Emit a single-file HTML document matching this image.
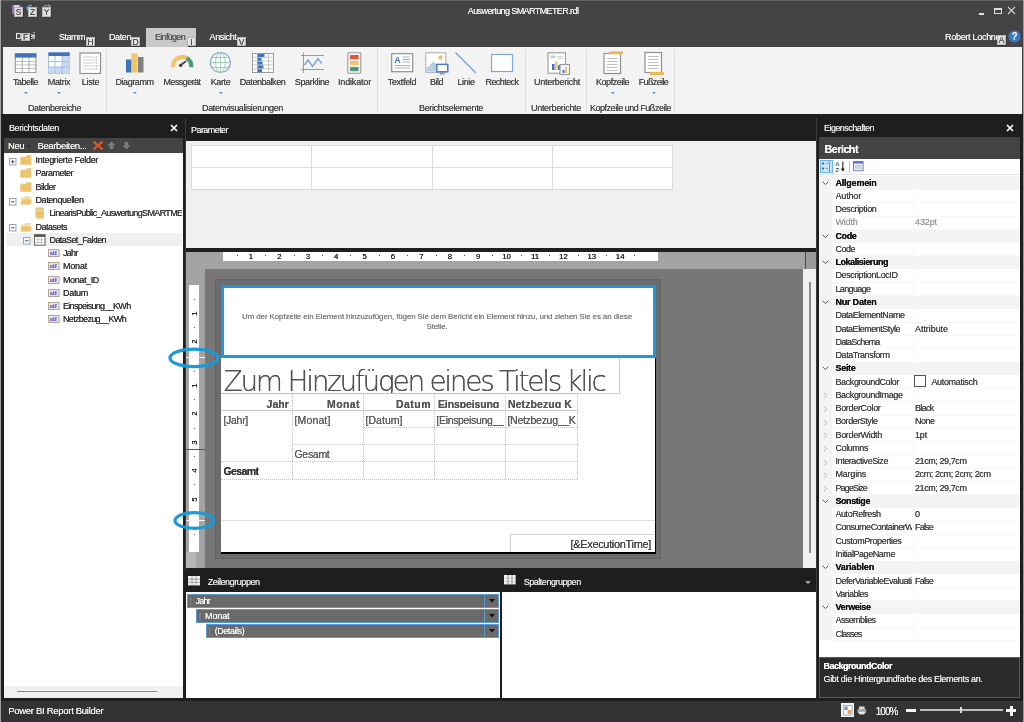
<!DOCTYPE html>
<html lang="de"><head><meta charset="utf-8"><title>Power BI Report Builder</title><style>
html,body{margin:0;padding:0;}
body{width:1024px;height:722px;overflow:hidden;background:#1e1e1e;font-family:"Liberation Sans", sans-serif;position:relative;}
#app{position:absolute;left:0;top:0;width:1024px;height:722px;overflow:hidden;will-change:transform;}
#app div,#app svg{position:absolute;box-sizing:border-box;}
#app .t{white-space:nowrap;text-shadow:0 0 0.2px;}
</style></head>
<body><div id="app">
<div style="left:0px;top:0px;width:1024px;height:722px;background:#444444;"></div>
<div style="left:0px;top:0px;width:1024px;height:1px;background:#646464;"></div>
<div style="left:0px;top:0px;width:1.1px;height:722px;background:#a0a0a0;"></div>
<div style="left:1022.8px;top:0px;width:1.2px;height:722px;background:#9a9a9a;"></div>
<div class="t" style="top:4.8px;font-size:9px;line-height:13px;color:#f0f0f0;letter-spacing:-0.595px;left:467.8px;"><span>Auswertung SMARTMETER.rdl</span></div>
<svg style="left:11px;top:4px;" width="12" height="12" viewBox="0 0 12 12"><rect x="1" y="1" width="9" height="9" rx="1" fill="#9b6fc0"/><rect x="3" y="1" width="5" height="3" fill="#d9c7ea"/></svg>
<svg style="left:25px;top:3px;" width="12" height="10" viewBox="0 0 12 10"><path d="M2.5 6 C3 3.5 5 2.2 7 2.2" stroke="#5b9bd5" stroke-width="1.5" fill="none"/><path d="M0.8 3.5 L2 7.5 L5 5z" fill="#5b9bd5"/></svg>
<svg style="left:41px;top:3px;" width="12" height="12" viewBox="0 0 12 12"><path d="M3 9 C0 5 4 1 8 3" stroke="#8a8a8a" stroke-width="1.4" fill="none"/><path d="M10.5 3 L7 1 L7.5 5.5z" fill="#8a8a8a"/></svg>
<div style="left:14px;top:7px;width:9px;height:9.5px;background:#e2e2e2;border:1px solid #b8b8b8;box-shadow:1px 1px 0 #3a3a3a;"></div>
<div class="t" style="top:6.15px;font-size:8.5px;line-height:12px;color:#505050;letter-spacing:0px;left:-281.5px;width:600px;text-align:center;"><span>S</span></div>
<div style="left:28px;top:7px;width:9px;height:9.5px;background:#e2e2e2;border:1px solid #b8b8b8;box-shadow:1px 1px 0 #3a3a3a;"></div>
<div class="t" style="top:6.15px;font-size:8.5px;line-height:12px;color:#505050;letter-spacing:0px;left:-267.5px;width:600px;text-align:center;"><span>Z</span></div>
<div style="left:42px;top:7px;width:9px;height:9.5px;background:#e2e2e2;border:1px solid #b8b8b8;box-shadow:1px 1px 0 #3a3a3a;"></div>
<div class="t" style="top:6.15px;font-size:8.5px;line-height:12px;color:#505050;letter-spacing:0px;left:-253.5px;width:600px;text-align:center;"><span>Y</span></div>
<div style="left:146px;top:28px;width:50px;height:18.6px;background:#c9c9c9;"></div>
<div class="t" style="top:30px;font-size:9px;line-height:13px;color:#f0f0f0;letter-spacing:-0.403px;left:15.5px;"><span>Datei</span></div>
<div class="t" style="top:30.5px;font-size:9px;line-height:13px;color:#f0f0f0;letter-spacing:-0.503px;left:59px;"><span>Stamm</span></div>
<div class="t" style="top:30.5px;font-size:9px;line-height:13px;color:#f0f0f0;letter-spacing:-0.406px;left:109px;"><span>Daten</span></div>
<div class="t" style="top:30.5px;font-size:9px;line-height:13px;color:#555;letter-spacing:-0.691px;left:155px;"><span>Einfügen</span></div>
<div class="t" style="top:30.5px;font-size:9px;line-height:13px;color:#f0f0f0;letter-spacing:-0.359px;left:209.5px;"><span>Ansicht</span></div>
<div style="left:21px;top:32.5px;width:9px;height:8.5px;background:#e2e2e2;border:1px solid #b8b8b8;box-shadow:1px 1px 0 #3a3a3a;"></div>
<div class="t" style="top:31.15px;font-size:8.5px;line-height:12px;color:#505050;letter-spacing:0px;left:-274.5px;width:600px;text-align:center;"><span>F</span></div>
<div style="left:86px;top:37px;width:9px;height:8.5px;background:#e2e2e2;border:1px solid #b8b8b8;box-shadow:1px 1px 0 #3a3a3a;"></div>
<div class="t" style="top:35.65px;font-size:8.5px;line-height:12px;color:#505050;letter-spacing:0px;left:-209.5px;width:600px;text-align:center;"><span>H</span></div>
<div style="left:131px;top:37px;width:9px;height:8.5px;background:#e2e2e2;border:1px solid #b8b8b8;box-shadow:1px 1px 0 #3a3a3a;"></div>
<div class="t" style="top:35.65px;font-size:8.5px;line-height:12px;color:#505050;letter-spacing:0px;left:-164.5px;width:600px;text-align:center;"><span>D</span></div>
<div style="left:187px;top:37px;width:9px;height:8.5px;background:#e2e2e2;border:1px solid #b8b8b8;box-shadow:1px 1px 0 #3a3a3a;"></div>
<div class="t" style="top:35.65px;font-size:8.5px;line-height:12px;color:#505050;letter-spacing:0px;left:-108.5px;width:600px;text-align:center;"><span>I</span></div>
<div style="left:237px;top:37px;width:9px;height:8.5px;background:#e2e2e2;border:1px solid #b8b8b8;box-shadow:1px 1px 0 #3a3a3a;"></div>
<div class="t" style="top:35.65px;font-size:8.5px;line-height:12px;color:#505050;letter-spacing:0px;left:-58.5px;width:600px;text-align:center;"><span>V</span></div>
<div class="t" style="top:30.5px;font-size:9px;line-height:13px;color:#f0f0f0;letter-spacing:-0.289px;left:945px;width:53px;overflow:hidden;"><span>Robert Lochner</span></div>
<div style="left:997px;top:35px;width:9px;height:9.5px;background:#e2e2e2;border:1px solid #b8b8b8;box-shadow:1px 1px 0 #3a3a3a;"></div>
<div class="t" style="top:34.15px;font-size:8.5px;line-height:12px;color:#505050;letter-spacing:0px;left:701.5px;width:600px;text-align:center;"><span>A</span></div>
<svg style="left:1008px;top:30px;" width="13" height="13" viewBox="0 0 13 13"><circle cx="6.5" cy="6.5" r="6" fill="#3b78c3"/><text x="6.5" y="10" font-size="10" font-weight="bold" text-anchor="middle" fill="#fff" font-family="Liberation Sans, sans-serif">?</text></svg>
<div style="left:979px;top:13px;width:5px;height:2px;background:#e0e0e0;"></div>
<div style="left:994px;top:8px;width:8px;height:6px;border:1px solid #e0e0e0;border-top-width:2px;"></div>
<svg style="left:1007px;top:6px;" width="9" height="9" viewBox="0 0 9 9"><path d="M1 1 L8 8 M8 1 L1 8" stroke="#d0d0d0" stroke-width="1.2" fill="none"/></svg>
<div style="left:2.7px;top:46.6px;width:1019px;height:67.2px;background:#f3f3f3;"></div>
<div style="left:105.5px;top:49px;width:1px;height:63px;background:#dedede;"></div>
<div style="left:377px;top:49px;width:1px;height:63px;background:#dedede;"></div>
<div style="left:524.5px;top:49px;width:1px;height:63px;background:#dedede;"></div>
<div style="left:585.5px;top:49px;width:1px;height:63px;background:#dedede;"></div>
<div style="left:674px;top:49px;width:1px;height:63px;background:#dedede;"></div>
<div class="t" style="top:75.5px;font-size:9px;line-height:13px;color:#4a4a4a;letter-spacing:-0.504px;left:-274.5px;width:600px;text-align:center;"><span>Tabelle</span></div>
<svg style="left:23.5px;top:92.3px;" width="4" height="3" viewBox="0 0 4 3"><path d="M0 0 L3.8 0 L1.9 2.1z" fill="#5a88c0"/></svg>
<div class="t" style="top:75.5px;font-size:9px;line-height:13px;color:#4a4a4a;letter-spacing:-0.333px;left:-241px;width:600px;text-align:center;"><span>Matrix</span></div>
<svg style="left:57px;top:92.3px;" width="4" height="3" viewBox="0 0 4 3"><path d="M0 0 L3.8 0 L1.9 2.1z" fill="#5a88c0"/></svg>
<div class="t" style="top:75.5px;font-size:9px;line-height:13px;color:#4a4a4a;letter-spacing:-0.303px;left:-209.5px;width:600px;text-align:center;"><span>Liste</span></div>
<div class="t" style="top:75.5px;font-size:9px;line-height:13px;color:#4a4a4a;letter-spacing:-0.439px;left:-165.5px;width:600px;text-align:center;"><span>Diagramm</span></div>
<svg style="left:132.5px;top:92.3px;" width="4" height="3" viewBox="0 0 4 3"><path d="M0 0 L3.8 0 L1.9 2.1z" fill="#5a88c0"/></svg>
<div class="t" style="top:75.5px;font-size:9px;line-height:13px;color:#4a4a4a;letter-spacing:-0.559px;left:-118px;width:600px;text-align:center;"><span>Messgerät</span></div>
<div class="t" style="top:75.5px;font-size:9px;line-height:13px;color:#4a4a4a;letter-spacing:-0.403px;left:-79.5px;width:600px;text-align:center;"><span>Karte</span></div>
<svg style="left:218.5px;top:92.3px;" width="4" height="3" viewBox="0 0 4 3"><path d="M0 0 L3.8 0 L1.9 2.1z" fill="#5a88c0"/></svg>
<div class="t" style="top:75.5px;font-size:9px;line-height:13px;color:#4a4a4a;letter-spacing:-0.459px;left:-37.5px;width:600px;text-align:center;"><span>Datenbalken</span></div>
<div class="t" style="top:75.5px;font-size:9px;line-height:13px;color:#4a4a4a;letter-spacing:-0.337px;left:12px;width:600px;text-align:center;"><span>Sparkline</span></div>
<div class="t" style="top:75.5px;font-size:9px;line-height:13px;color:#4a4a4a;letter-spacing:-0.17px;left:54.5px;width:600px;text-align:center;"><span>Indikator</span></div>
<div class="t" style="top:75.5px;font-size:9px;line-height:13px;color:#4a4a4a;letter-spacing:-0.316px;left:102px;width:600px;text-align:center;"><span>Textfeld</span></div>
<div class="t" style="top:75.5px;font-size:9px;line-height:13px;color:#4a4a4a;letter-spacing:-0.504px;left:136.5px;width:600px;text-align:center;"><span>Bild</span></div>
<div class="t" style="top:75.5px;font-size:9px;line-height:13px;color:#4a4a4a;letter-spacing:-0.403px;left:166px;width:600px;text-align:center;"><span>Linie</span></div>
<div class="t" style="top:75.5px;font-size:9px;line-height:13px;color:#4a4a4a;letter-spacing:-0.566px;left:202px;width:600px;text-align:center;"><span>Rechteck</span></div>
<div class="t" style="top:75.5px;font-size:9px;line-height:13px;color:#4a4a4a;letter-spacing:-0.253px;left:257px;width:600px;text-align:center;"><span>Unterbericht</span></div>
<div class="t" style="top:75.5px;font-size:9px;line-height:13px;color:#4a4a4a;letter-spacing:-0.448px;left:312.5px;width:600px;text-align:center;"><span>Kopfzeile</span></div>
<svg style="left:610.5px;top:92.3px;" width="4" height="3" viewBox="0 0 4 3"><path d="M0 0 L3.8 0 L1.9 2.1z" fill="#5a88c0"/></svg>
<div class="t" style="top:75.5px;font-size:9px;line-height:13px;color:#4a4a4a;letter-spacing:-0.627px;left:353.5px;width:600px;text-align:center;"><span>Fußzeile</span></div>
<svg style="left:651.5px;top:92.3px;" width="4" height="3" viewBox="0 0 4 3"><path d="M0 0 L3.8 0 L1.9 2.1z" fill="#5a88c0"/></svg>
<div class="t" style="top:101.8px;font-size:9px;line-height:13px;color:#4a4a4a;letter-spacing:-0.427px;left:-245.5px;width:600px;text-align:center;"><span>Datenbereiche</span></div>
<div class="t" style="top:101.8px;font-size:9px;line-height:13px;color:#4a4a4a;letter-spacing:-0.36px;left:-57.5px;width:600px;text-align:center;"><span>Datenvisualisierungen</span></div>
<div class="t" style="top:101.8px;font-size:9px;line-height:13px;color:#4a4a4a;letter-spacing:-0.347px;left:151px;width:600px;text-align:center;"><span>Berichtselemente</span></div>
<div class="t" style="top:101.8px;font-size:9px;line-height:13px;color:#4a4a4a;letter-spacing:-0.31px;left:256px;width:600px;text-align:center;"><span>Unterberichte</span></div>
<div class="t" style="top:101.8px;font-size:9px;line-height:13px;color:#4a4a4a;letter-spacing:-0.48px;left:330.5px;width:600px;text-align:center;"><span>Kopfzeile und Fußzeile</span></div>
<svg style="left:14px;top:53px;" width="23" height="20" viewBox="0 0 23 20"><rect x="1.3" y="0.9" width="20.6" height="18.8" fill="#fff" stroke="#8a8a8a" stroke-width="1"/>
<rect x="0.9" y="0.4" width="21.4" height="4.2" fill="#3f75b8"/>
<path d="M8.2 4.6V19.5M15 4.6V19.5" stroke="#a0a0a0" stroke-width="0.9" fill="none"/><path d="M1.3 8.5H22M1.3 11.9H22M1.3 15.5H22" stroke="#b0b0b0" stroke-width="0.8" fill="none"/></svg>
<svg style="left:48px;top:52px;" width="23" height="22" viewBox="0 0 23 22"><rect x="0.5" y="0.5" width="21" height="21" fill="#fff" stroke="#a9bfdc"/>
<rect x="0.5" y="0.5" width="21" height="3.5" fill="#3f75b8"/>
<rect x="14" y="4" width="7.5" height="17.5" fill="#c7d9ee"/><rect x="0.5" y="15" width="21" height="6.5" fill="#c7d9ee"/>
<path d="M7 4V21.5M14 4V21.5M0.5 9.5H21.5M0.5 15H21.5" stroke="#a9bfdc" fill="none"/></svg>
<svg style="left:79px;top:52px;" width="23" height="22" viewBox="0 0 23 22"><rect x="1" y="1" width="20.5" height="20.5" fill="#fff" stroke="#8f8f8f" stroke-width="1.2"/>
<path d="M4 5H15M4 8H15M4 11H15M4 14H15M4 17H15" stroke="#c2c2c2" stroke-width="0.8" fill="none"/>
<path d="M16.5 5h1.5M16.5 8h1.5M16.5 11h1.5M16.5 14h1.5M16.5 17h1.5" stroke="#8a8a8a" stroke-width="1"/></svg>
<svg style="left:125px;top:53px;" width="20" height="20" viewBox="0 0 20 20"><rect x="1" y="6.5" width="5.5" height="13" fill="#3f75b8"/><rect x="6.5" y="0.5" width="6" height="19" fill="#f0c36d"/><rect x="13" y="4" width="5.5" height="15.5" fill="#7f7f7f"/></svg>
<svg style="left:170px;top:54px;" width="25" height="15" viewBox="0 0 25 15"><path d="M3.3 13.3 A9 9 0 0 1 17 4.4" stroke="#f0c36d" stroke-width="4.2" fill="none"/>
<path d="M16.6 4.1 A9 9 0 0 1 21.2 13.3" stroke="#4e9a78" stroke-width="4.2" fill="none"/>
<path d="M10.5 11.3 L16 7.2" stroke="#444" stroke-width="1.9"/><circle cx="10.6" cy="11.4" r="1.7" fill="#444"/></svg>
<svg style="left:209px;top:51px;" width="23" height="23" viewBox="0 0 23 23"><circle cx="11.4" cy="11.5" r="10" fill="#fff" stroke="#7aa6cf" stroke-width="1.2"/>
<ellipse cx="11.4" cy="11.5" rx="4.8" ry="10" fill="none" stroke="#93c4aa" stroke-width="0.9"/>
<path d="M11.4 1.5V21.5M1.4 11.5H21.4M3 6.5H19.8M3 16.5H19.8" stroke="#93c4aa" stroke-width="0.9" fill="none"/></svg>
<svg style="left:252px;top:53px;" width="22" height="20" viewBox="0 0 22 20"><rect x="0.5" y="0.5" width="21" height="19" fill="#fff" stroke="#9a9a9a"/>
<path d="M5.5 0.5V19.5M16.5 0.5V19.5M0.5 4.3H21.5M0.5 8.1H21.5M0.5 11.9H21.5M0.5 15.7H21.5" stroke="#b9b9b9" stroke-width="0.8" fill="none"/>
<rect x="5.5" y="1" width="7" height="3" fill="#3f75b8"/><rect x="5.5" y="4.8" width="4" height="3" fill="#3f75b8"/><rect x="5.5" y="8.6" width="5" height="3" fill="#3f75b8"/><rect x="5.5" y="12.4" width="6" height="3" fill="#3f75b8"/><rect x="5.5" y="16.2" width="4.5" height="3" fill="#3f75b8"/></svg>
<svg style="left:300px;top:52px;" width="25" height="22" viewBox="0 0 25 22"><path d="M3.5 0.5V21M1 3.5H24M1 17.5H24" stroke="#9a9a9a" stroke-width="1" fill="none"/>
<path d="M4.5 13 L8 8 L12.5 14.5 L18 6.5 L21.5 11.5" stroke="#7da2d0" stroke-width="1.5" fill="none"/></svg>
<svg style="left:347px;top:52px;" width="15" height="22" viewBox="0 0 15 22"><rect x="0.8" y="0.8" width="13" height="20.4" rx="1" fill="#f4f4f4" stroke="#9a9a9a" stroke-width="1.1"/>
<rect x="3" y="3" width="8.6" height="4.2" fill="#e2553a"/><rect x="3" y="9" width="8.6" height="4.2" fill="#f0c36d"/><rect x="3" y="15" width="8.6" height="4.2" fill="#4e9a78"/></svg>
<svg style="left:391px;top:53px;" width="23" height="20" viewBox="0 0 23 20"><rect x="0.7" y="0.7" width="21" height="18" fill="#fff" stroke="#8f8f8f" stroke-width="1.2"/>
<text x="3.2" y="10.3" font-size="9" font-weight="bold" fill="#3f75b8" font-family="Liberation Sans, sans-serif">A</text>
<path d="M11.5 4H19M11.5 6.5H19M11.5 9H19M3.5 12.5H19M3.5 15H19" stroke="#a8a8a8" stroke-width="0.9" fill="none"/></svg>
<svg style="left:425px;top:52px;" width="25" height="23" viewBox="0 0 25 23"><rect x="0.8" y="0.8" width="20" height="19.5" fill="#fff" stroke="#b0b0b0" stroke-width="1.1"/>
<circle cx="15.5" cy="5.5" r="2.2" fill="#f0c36d"/>
<path d="M1.5 19.5 L1.5 16 L8.5 9.5 L11 12 L11 19.5z" fill="#b9cde6"/>
<rect x="11.8" y="12.4" width="11" height="7.4" fill="#fff" stroke="#4a7dbd" stroke-width="1.5"/>
<path d="M15 21.8H19.5" stroke="#4a7dbd" stroke-width="1.1"/></svg>
<svg style="left:454px;top:51px;" width="24" height="24" viewBox="0 0 24 24"><path d="M1.5 1.5 L22 22" stroke="#7fa5d3" stroke-width="1.4"/></svg>
<svg style="left:490px;top:53px;" width="24" height="20" viewBox="0 0 24 20"><rect x="1.5" y="1.5" width="21" height="17" fill="#fff" stroke="#82a8d6" stroke-width="1.2"/></svg>
<svg style="left:547px;top:52px;" width="24" height="24" viewBox="0 0 24 24"><rect x="1" y="0.8" width="17.5" height="20.4" fill="#fff" stroke="#9a9a9a" stroke-width="1.1"/>
<rect x="3.5" y="3.5" width="5" height="2.5" fill="#b9cde6"/><path d="M10 4.5H16M10 6.5H16" stroke="#c5c5c5" stroke-width="0.8"/>
<rect x="5" y="12" width="2.5" height="6" fill="#3f75b8"/><rect x="8" y="9.5" width="2.5" height="8.5" fill="#f0c36d"/><rect x="11" y="13" width="2.5" height="5" fill="#3f75b8"/>
<rect x="13" y="12.5" width="9.5" height="10" fill="#f4f4f4" stroke="#9a9a9a" stroke-width="1.1"/>
<rect x="15.5" y="18" width="2" height="3" fill="#3f75b8"/><rect x="18" y="15.5" width="2" height="5.5" fill="#f0c36d"/></svg>
<svg style="left:603px;top:51px;" width="21" height="24" viewBox="0 0 21 24"><rect x="1" y="2.5" width="16.5" height="20" fill="#fff" stroke="#8f8f8f" stroke-width="1.2"/>
<path d="M4 7.5H14.5M4 10.5H14.5M4 13.5H14.5M4 16.5H14.5M4 19.5H14.5" stroke="#b5b5b5" stroke-width="0.9"/>
<rect x="6" y="0.3" width="13.8" height="3" fill="#f0b955"/></svg>
<svg style="left:644px;top:51px;" width="21" height="25" viewBox="0 0 21 25"><rect x="1" y="1.5" width="16.5" height="20" fill="#fff" stroke="#8f8f8f" stroke-width="1.2"/>
<path d="M4 5.5H14.5M4 8.5H14.5M4 11.5H14.5M4 14.5H14.5M4 17.5H14.5" stroke="#b5b5b5" stroke-width="0.9"/>
<rect x="6" y="21" width="14" height="3" fill="#f0b955"/></svg>
<div style="left:1.1px;top:113.8px;width:1021.7px;height:587.2px;background:#1e1e1e;"></div>
<div style="left:4.4px;top:137.5px;width:178.6px;height:15.5px;background:#444444;"></div>
<div style="left:4.4px;top:153px;width:178.6px;height:533px;background:#ffffff;"></div>
<div style="left:4.4px;top:685.5px;width:178.6px;height:12.2px;background:#f0f0f0;"></div>
<div style="left:17.4px;top:690.6px;width:140px;height:1.5px;background:#8a8a8a;"></div>
<div class="t" style="top:121.5px;font-size:9px;line-height:13px;color:#e6e6e6;letter-spacing:-0.388px;left:9px;"><span>Berichtsdaten</span></div>
<svg style="left:170px;top:124px;" width="8" height="8" viewBox="0 0 8 8"><path d="M1 1 L7 7 M7 1 L1 7" stroke="#fff" stroke-width="1.7" fill="none"/></svg>
<div class="t" style="top:138.8px;font-size:9.5px;line-height:13px;color:#f0f0f0;letter-spacing:-0.479px;left:8px;"><span>Neu</span></div>
<svg style="left:27px;top:144.5px;" width="4" height="3" viewBox="0 0 4 3"><path d="M0 0 L4 0 L2 2.5z" fill="#2e2e2e"/></svg>
<div class="t" style="top:138.8px;font-size:9.5px;line-height:13px;color:#f0f0f0;letter-spacing:-0.375px;left:37.5px;"><span>Bearbeiten...</span></div>
<svg style="left:92px;top:140px;" width="12" height="11" viewBox="0 0 12 11"><path d="M1.5 1.5 L10.5 9.5 M10.5 1.5 L1.5 9.5" stroke="#e8562a" stroke-width="2" fill="none"/></svg>
<svg style="left:107px;top:141px;" width="9" height="9" viewBox="0 0 9 9"><path d="M4.5 0.5 L8.5 4.5 H6.3 V8 H2.7 V4.5 H0.5z" fill="#7d7d7d"/></svg>
<svg style="left:122px;top:141px;" width="9" height="9" viewBox="0 0 9 9"><path d="M4.5 8.5 L8.5 4.5 H6.3 V1 H2.7 V4.5 H0.5z" fill="#7d7d7d"/></svg>
<div style="left:6px;top:233.12px;width:176px;height:13px;background:#f0f0f0;"></div>
<svg style="left:8.7px;top:158.0px;" width="8" height="8" viewBox="0 0 8 8"><rect x="0.5" y="0.5" width="6.5" height="6.5" fill="#fff" stroke="#9aa3b5" stroke-width="1"/><path d="M2 3.75H5.5" stroke="#44557a" stroke-width="1"/><path d="M3.75 2V5.5" stroke="#44557a" stroke-width="1"/></svg>
<svg style="left:19.7px;top:155.2px;" width="12" height="10" viewBox="0 0 12 10"><path d="M0.3 9.8V1.8H5.5L7 0.3H11.3V9.8z" fill="#ecc36f"/></svg>
<div class="t" style="top:154.2px;font-size:9px;line-height:13px;color:#333;letter-spacing:-0.336px;left:35.5px;"><span>Integrierte Felder</span></div>
<svg style="left:19.7px;top:168.47px;" width="12" height="10" viewBox="0 0 12 10"><path d="M0.3 9.8V1.8H5.5L7 0.3H11.3V9.8z" fill="#ecc36f"/></svg>
<div class="t" style="top:167.47px;font-size:9px;line-height:13px;color:#333;letter-spacing:-0.503px;left:35.5px;"><span>Parameter</span></div>
<svg style="left:19.7px;top:181.73999999999998px;" width="12" height="10" viewBox="0 0 12 10"><path d="M0.3 9.8V1.8H5.5L7 0.3H11.3V9.8z" fill="#ecc36f"/></svg>
<div class="t" style="top:180.74px;font-size:9px;line-height:13px;color:#333;letter-spacing:-0.503px;left:35.5px;"><span>Bilder</span></div>
<svg style="left:8.7px;top:197.81px;" width="8" height="8" viewBox="0 0 8 8"><rect x="0.5" y="0.5" width="6.5" height="6.5" fill="#fff" stroke="#9aa3b5" stroke-width="1"/><path d="M2 3.75H5.5" stroke="#44557a" stroke-width="1"/></svg>
<svg style="left:19.7px;top:195.01px;" width="12" height="10" viewBox="0 0 12 10"><path d="M0.5 9.5V2.5H4L5 1H10.5V9.5z" fill="#f3dfae"/><path d="M0.5 9.5L2.5 4.5H11.8L10.5 9.5z" fill="#ecc36f"/></svg>
<div class="t" style="top:194.01px;font-size:9px;line-height:13px;color:#333;letter-spacing:-0.421px;left:35.5px;"><span>Datenquellen</span></div>
<svg style="left:35.3px;top:206.77999999999997px;" width="10" height="12" viewBox="0 0 10 12"><path d="M0.5 2 Q0.5 0.3 4.7 0.3 Q9 0.3 9 2 V10 Q9 11.7 4.7 11.7 Q0.5 11.7 0.5 10z" fill="#ecc36f"/><path d="M0.5 3.2 Q4.7 4.8 9 3.2" stroke="#f6e3b5" stroke-width="0.8" fill="none"/></svg>
<div class="t" style="top:207.28px;font-size:9px;line-height:13px;color:#333;letter-spacing:-0.64px;left:49.5px;width:132.5px;overflow:hidden;"><span>LinearisPublic_AuswertungSMARTMETER</span></div>
<svg style="left:8.7px;top:224.35px;" width="8" height="8" viewBox="0 0 8 8"><rect x="0.5" y="0.5" width="6.5" height="6.5" fill="#fff" stroke="#9aa3b5" stroke-width="1"/><path d="M2 3.75H5.5" stroke="#44557a" stroke-width="1"/></svg>
<svg style="left:19.7px;top:221.54999999999998px;" width="12" height="10" viewBox="0 0 12 10"><path d="M0.5 9.5V2.5H4L5 1H10.5V9.5z" fill="#f3dfae"/><path d="M0.5 9.5L2.5 4.5H11.8L10.5 9.5z" fill="#ecc36f"/></svg>
<div class="t" style="top:220.55px;font-size:9px;line-height:13px;color:#333;letter-spacing:-0.504px;left:35.5px;"><span>Datasets</span></div>
<svg style="left:22.8px;top:237.22px;" width="8" height="8" viewBox="0 0 8 8"><rect x="0.5" y="0.5" width="6.5" height="6.5" fill="#fff" stroke="#9aa3b5" stroke-width="1"/><path d="M2 3.75H5.5" stroke="#44557a" stroke-width="1"/></svg>
<svg style="left:33.7px;top:233.82px;" width="12" height="12" viewBox="0 0 12 12"><rect x="0.5" y="0.8" width="10.6" height="10.4" fill="#fff" stroke="#666" stroke-width="1"/><rect x="0.5" y="0.5" width="10.6" height="2.4" fill="#555"/><path d="M0.5 5.7H11M0.5 8.5H11M4 3V11M7.6 3V11" stroke="#bdbdbd" stroke-width="0.8"/></svg>
<div class="t" style="top:233.82px;font-size:9px;line-height:13px;color:#333;letter-spacing:-0.61px;left:49.5px;"><span>DataSet_Fakten</span></div>
<svg style="left:47.6px;top:249.08999999999997px;" width="12" height="8" viewBox="0 0 12 8"><rect x="0.5" y="0.5" width="10.6" height="7" fill="#e9e4f7" stroke="#b9a58a" stroke-width="1"/><text x="1.8" y="6.2" font-size="5.5" font-weight="bold" fill="#4a52c8" font-family="Liberation Sans, sans-serif">ab</text><path d="M8 2.5V6M7.2 2.5H8.8" stroke="#4a52c8" stroke-width="0.7"/></svg>
<div class="t" style="top:247.09px;font-size:9px;line-height:13px;color:#333;letter-spacing:-0.754px;left:63px;"><span>Jahr</span></div>
<svg style="left:47.6px;top:262.36px;" width="12" height="8" viewBox="0 0 12 8"><rect x="0.5" y="0.5" width="10.6" height="7" fill="#e9e4f7" stroke="#b9a58a" stroke-width="1"/><text x="1.8" y="6.2" font-size="5.5" font-weight="bold" fill="#4a52c8" font-family="Liberation Sans, sans-serif">ab</text><path d="M8 2.5V6M7.2 2.5H8.8" stroke="#4a52c8" stroke-width="0.7"/></svg>
<div class="t" style="top:260.36px;font-size:9px;line-height:13px;color:#333;letter-spacing:-0.203px;left:63px;"><span>Monat</span></div>
<svg style="left:47.6px;top:275.63px;" width="12" height="8" viewBox="0 0 12 8"><rect x="0.5" y="0.5" width="10.6" height="7" fill="#e9e4f7" stroke="#b9a58a" stroke-width="1"/><text x="1.8" y="6.2" font-size="5.5" font-weight="bold" fill="#4a52c8" font-family="Liberation Sans, sans-serif">ab</text><path d="M8 2.5V6M7.2 2.5H8.8" stroke="#4a52c8" stroke-width="0.7"/></svg>
<div class="t" style="top:273.63px;font-size:9px;line-height:13px;color:#333;letter-spacing:-0.379px;left:63px;"><span>Monat_ID</span></div>
<svg style="left:47.6px;top:288.9px;" width="12" height="8" viewBox="0 0 12 8"><rect x="0.5" y="0.5" width="10.6" height="7" fill="#e9e4f7" stroke="#b9a58a" stroke-width="1"/><text x="1.8" y="6.2" font-size="5.5" font-weight="bold" fill="#4a52c8" font-family="Liberation Sans, sans-serif">ab</text><path d="M8 2.5V6M7.2 2.5H8.8" stroke="#4a52c8" stroke-width="0.7"/></svg>
<div class="t" style="top:286.9px;font-size:9px;line-height:13px;color:#333;letter-spacing:-0.303px;left:63px;"><span>Datum</span></div>
<svg style="left:47.6px;top:302.16999999999996px;" width="12" height="8" viewBox="0 0 12 8"><rect x="0.5" y="0.5" width="10.6" height="7" fill="#e9e4f7" stroke="#b9a58a" stroke-width="1"/><text x="1.8" y="6.2" font-size="5.5" font-weight="bold" fill="#4a52c8" font-family="Liberation Sans, sans-serif">ab</text><path d="M8 2.5V6M7.2 2.5H8.8" stroke="#4a52c8" stroke-width="0.7"/></svg>
<div class="t" style="top:300.17px;font-size:9px;line-height:13px;color:#333;letter-spacing:-0.691px;left:63px;"><span>Einspeisung__KWh</span></div>
<svg style="left:47.6px;top:315.44px;" width="12" height="8" viewBox="0 0 12 8"><rect x="0.5" y="0.5" width="10.6" height="7" fill="#e9e4f7" stroke="#b9a58a" stroke-width="1"/><text x="1.8" y="6.2" font-size="5.5" font-weight="bold" fill="#4a52c8" font-family="Liberation Sans, sans-serif">ab</text><path d="M8 2.5V6M7.2 2.5H8.8" stroke="#4a52c8" stroke-width="0.7"/></svg>
<div class="t" style="top:313.44px;font-size:9px;line-height:13px;color:#333;letter-spacing:-0.682px;left:63px;"><span>Netzbezug__KWh</span></div>
<div style="left:185px;top:118px;width:1px;height:452px;background:#3c3c3c;"></div>
<div style="left:186px;top:141px;width:630px;height:107px;background:#f0f0f0;"></div>
<div class="t" style="top:123.5px;font-size:9px;line-height:13px;color:#e6e6e6;letter-spacing:-0.559px;left:191px;"><span>Parameter</span></div>
<div style="left:190.5px;top:145px;width:482.2px;height:44.5px;background:#ffffff;border:1px solid #dadada;"></div>
<div style="left:190.5px;top:167px;width:482.2px;height:1px;background:#dadada;"></div>
<div style="left:310.6px;top:145px;width:1px;height:44.5px;background:#dadada;"></div>
<div style="left:431.6px;top:145px;width:1px;height:44.5px;background:#dadada;"></div>
<div style="left:551.5px;top:145px;width:1px;height:44.5px;background:#dadada;"></div>
<div style="left:186px;top:252px;width:630px;height:316px;background:#a3a3a3;"></div>
<div style="left:205px;top:269px;width:598px;height:299px;background:#777777;"></div>
<div style="left:805px;top:252px;width:1px;height:17px;background:#4a4a4a;"></div>
<div style="left:806px;top:252px;width:10px;height:17px;background:#9a9a9a;"></div>
<div style="left:803px;top:269px;width:13px;height:299px;background:#f0f0f0;"></div>
<div style="left:809px;top:282px;width:2px;height:271px;background:#8c8c8c;"></div>
<div style="left:223px;top:252px;width:435px;height:8.6px;background:#ffffff;"></div>
<div class="t" style="top:250.8px;font-size:7.8px;line-height:11px;color:#222;letter-spacing:0px;left:-49px;width:600px;text-align:center;"><span>1</span></div>
<div class="t" style="top:250.8px;font-size:7.8px;line-height:11px;color:#222;letter-spacing:0px;left:-20.6px;width:600px;text-align:center;"><span>2</span></div>
<div class="t" style="top:250.8px;font-size:7.8px;line-height:11px;color:#222;letter-spacing:0px;left:7.8px;width:600px;text-align:center;"><span>3</span></div>
<div class="t" style="top:250.8px;font-size:7.8px;line-height:11px;color:#222;letter-spacing:0px;left:36.2px;width:600px;text-align:center;"><span>4</span></div>
<div class="t" style="top:250.8px;font-size:7.8px;line-height:11px;color:#222;letter-spacing:0px;left:64.6px;width:600px;text-align:center;"><span>5</span></div>
<div class="t" style="top:250.8px;font-size:7.8px;line-height:11px;color:#222;letter-spacing:0px;left:93px;width:600px;text-align:center;"><span>6</span></div>
<div class="t" style="top:250.8px;font-size:7.8px;line-height:11px;color:#222;letter-spacing:0px;left:121.4px;width:600px;text-align:center;"><span>7</span></div>
<div class="t" style="top:250.8px;font-size:7.8px;line-height:11px;color:#222;letter-spacing:0px;left:149.8px;width:600px;text-align:center;"><span>8</span></div>
<div class="t" style="top:250.8px;font-size:7.8px;line-height:11px;color:#222;letter-spacing:0px;left:178.2px;width:600px;text-align:center;"><span>9</span></div>
<div class="t" style="top:250.8px;font-size:7.8px;line-height:11px;color:#222;letter-spacing:0px;left:206.6px;width:600px;text-align:center;"><span>10</span></div>
<div class="t" style="top:250.8px;font-size:7.8px;line-height:11px;color:#222;letter-spacing:0px;left:235px;width:600px;text-align:center;"><span>11</span></div>
<div class="t" style="top:250.8px;font-size:7.8px;line-height:11px;color:#222;letter-spacing:0px;left:263.4px;width:600px;text-align:center;"><span>12</span></div>
<div class="t" style="top:250.8px;font-size:7.8px;line-height:11px;color:#222;letter-spacing:0px;left:291.8px;width:600px;text-align:center;"><span>13</span></div>
<div class="t" style="top:250.8px;font-size:7.8px;line-height:11px;color:#222;letter-spacing:0px;left:320.2px;width:600px;text-align:center;"><span>14</span></div>
<div style="left:237px;top:255px;width:1px;height:1px;background:#444;"></div>
<div style="left:265px;top:255px;width:1px;height:1px;background:#444;"></div>
<div style="left:294px;top:255px;width:1px;height:1px;background:#444;"></div>
<div style="left:322px;top:255px;width:1px;height:1px;background:#444;"></div>
<div style="left:350px;top:255px;width:1px;height:1px;background:#444;"></div>
<div style="left:379px;top:255px;width:1px;height:1px;background:#444;"></div>
<div style="left:407px;top:255px;width:1px;height:1px;background:#444;"></div>
<div style="left:436px;top:255px;width:1px;height:1px;background:#444;"></div>
<div style="left:464px;top:255px;width:1px;height:1px;background:#444;"></div>
<div style="left:492px;top:255px;width:1px;height:1px;background:#444;"></div>
<div style="left:521px;top:255px;width:1px;height:1px;background:#444;"></div>
<div style="left:549px;top:255px;width:1px;height:1px;background:#444;"></div>
<div style="left:578px;top:255px;width:1px;height:1px;background:#444;"></div>
<div style="left:606px;top:255px;width:1px;height:1px;background:#444;"></div>
<div style="left:634px;top:255px;width:1px;height:1px;background:#444;"></div>
<div style="left:188.5px;top:285px;width:10.7px;height:267.3px;background:#ffffff;"></div>
<div style="left:186px;top:552.3px;width:10px;height:15.7px;background:#b5b5b5;"></div>
<div style="left:194px;top:299px;width:1px;height:1px;background:#555;"></div>
<div class="t" style="top:307.9px;font-size:7.8px;line-height:11px;color:#222;letter-spacing:0px;left:-106px;width:600px;text-align:center;transform:rotate(-90deg);"><span>1</span></div>
<div style="left:194px;top:327px;width:1px;height:1px;background:#555;"></div>
<div class="t" style="top:336.3px;font-size:7.8px;line-height:11px;color:#222;letter-spacing:0px;left:-106px;width:600px;text-align:center;transform:rotate(-90deg);"><span>2</span></div>
<div style="left:194px;top:357px;width:1px;height:1px;background:#555;"></div>
<div style="left:194px;top:371px;width:1px;height:1px;background:#555;"></div>
<div class="t" style="top:379.9px;font-size:7.8px;line-height:11px;color:#222;letter-spacing:0px;left:-106px;width:600px;text-align:center;transform:rotate(-90deg);"><span>1</span></div>
<div style="left:194px;top:399px;width:1px;height:1px;background:#555;"></div>
<div class="t" style="top:408.3px;font-size:7.8px;line-height:11px;color:#222;letter-spacing:0px;left:-106px;width:600px;text-align:center;transform:rotate(-90deg);"><span>2</span></div>
<div style="left:194px;top:428px;width:1px;height:1px;background:#555;"></div>
<div class="t" style="top:436.7px;font-size:7.8px;line-height:11px;color:#222;letter-spacing:0px;left:-106px;width:600px;text-align:center;transform:rotate(-90deg);"><span>3</span></div>
<div style="left:194px;top:456px;width:1px;height:1px;background:#555;"></div>
<div class="t" style="top:465.1px;font-size:7.8px;line-height:11px;color:#222;letter-spacing:0px;left:-106px;width:600px;text-align:center;transform:rotate(-90deg);"><span>4</span></div>
<div style="left:194px;top:484px;width:1px;height:1px;background:#555;"></div>
<div class="t" style="top:493.5px;font-size:7.8px;line-height:11px;color:#222;letter-spacing:0px;left:-106px;width:600px;text-align:center;transform:rotate(-90deg);"><span>5</span></div>
<div style="left:194px;top:513px;width:1px;height:1px;background:#555;"></div>
<div style="left:194px;top:520px;width:1px;height:1px;background:#555;"></div>
<div style="left:194px;top:534px;width:1px;height:1px;background:#555;"></div>
<div style="left:186px;top:356.8px;width:19px;height:1.2px;background:#f4f4f4;"></div>
<div style="left:186px;top:449px;width:19px;height:1.2px;background:#555;"></div>
<div style="left:186px;top:519.8px;width:19px;height:1.2px;background:#f4f4f4;"></div>
<div style="left:215px;top:279px;width:446px;height:280px;background:#6c6c6c;border:1px solid #636363;"></div>
<div style="left:221px;top:284.5px;width:435px;height:269px;background:#000;"></div>
<div style="left:221px;top:284.5px;width:433.6px;height:267.5px;background:#ffffff;"></div>
<div style="left:221px;top:284.5px;width:434.6px;height:73.3px;border:3.4px solid #1b9ad7;"></div>
<div class="t" style="top:311px;font-size:8px;line-height:11px;color:#828282;letter-spacing:-0.138px;left:137px;width:600px;text-align:center;"><span>Um der Kopfzeile ein Element hinzuzufügen, fügen Sie dem Bericht ein Element hinzu, und ziehen Sie es an diese</span></div>
<div class="t" style="top:321px;font-size:8px;line-height:11px;color:#828282;letter-spacing:-0.176px;left:137px;width:600px;text-align:center;"><span>Stelle.</span></div>
<div style="left:221px;top:358px;width:399px;height:36px;border-right:1px solid #c9c9c9;border-bottom:1px solid #d0d0d0;"></div>
<div class="t" style="top:361.5px;font-size:28px;line-height:39px;color:#525252;letter-spacing:-2.298px;font-family:'DejaVu Sans Light','DejaVu Sans','Liberation Sans',sans-serif;left:223.5px;font-weight:200;text-shadow:0 0 0.5px;width:396px;height:31.5px;overflow:hidden;"><span>Zum Hinzufügen eines Titels klic</span></div>
<div style="left:221px;top:393px;width:356.5px;height:1px;border-top:1px dotted #b4b4b4;"></div>
<div style="left:221px;top:410.2px;width:356.5px;height:1px;background:#c4c4c4;"></div>
<div style="left:363.5px;top:427.2px;width:213.5px;height:1px;border-top:1px dotted #c4c4c4;"></div>
<div style="left:292.4px;top:444.2px;width:284.6px;height:1px;border-top:1px dotted #c4c4c4;"></div>
<div style="left:221px;top:461.3px;width:356px;height:1px;border-top:1px dotted #c4c4c4;"></div>
<div style="left:221px;top:478.8px;width:356px;height:1px;border-top:1px dotted #c4c4c4;"></div>
<div style="left:291.9px;top:393.3px;width:1px;height:86px;border-left:1px dotted #bcbcbc;"></div>
<div style="left:363.0px;top:393.3px;width:1px;height:86px;border-left:1px dotted #bcbcbc;"></div>
<div style="left:434.0px;top:393.3px;width:1px;height:86px;border-left:1px dotted #bcbcbc;"></div>
<div style="left:505.1px;top:393.3px;width:1px;height:86px;border-left:1px dotted #bcbcbc;"></div>
<div style="left:576.5px;top:393.3px;width:1px;height:86px;border-left:1px dotted #bcbcbc;"></div>
<div class="t" style="top:396.8px;font-size:10.5px;line-height:15px;color:#555;letter-spacing:0.078px;font-weight:bold;left:-311px;width:600px;text-align:right;"><span>Jahr</span></div>
<div class="t" style="top:396.8px;font-size:10.5px;line-height:15px;color:#555;letter-spacing:0.416px;font-weight:bold;left:-240px;width:600px;text-align:right;"><span>Monat</span></div>
<div class="t" style="top:396.8px;font-size:10.5px;line-height:15px;color:#555;letter-spacing:0.466px;font-weight:bold;left:-169px;width:600px;text-align:right;"><span>Datum</span></div>
<div class="t" style="top:396.8px;font-size:10.5px;line-height:15px;color:#555;letter-spacing:-0.131px;font-weight:bold;left:438px;height:11.5px;overflow:hidden;"><span>Einspeisung</span></div>
<div class="t" style="top:396.8px;font-size:10.5px;line-height:15px;color:#555;letter-spacing:0.091px;font-weight:bold;left:508px;height:11.5px;overflow:hidden;"><span>Netzbezug K</span></div>
<div class="t" style="top:412.5px;font-size:10.5px;line-height:15px;color:#5a5a5a;letter-spacing:-0.294px;left:223.5px;"><span>[Jahr]</span></div>
<div class="t" style="top:412.5px;font-size:10.5px;line-height:15px;color:#5a5a5a;letter-spacing:0.138px;left:294.5px;"><span>[Monat]</span></div>
<div class="t" style="top:412.5px;font-size:10.5px;line-height:15px;color:#5a5a5a;letter-spacing:0.033px;left:365.5px;"><span>[Datum]</span></div>
<div class="t" style="top:412.5px;font-size:10.5px;line-height:15px;color:#5a5a5a;letter-spacing:-0.344px;left:436.5px;"><span>[Einspeisung__</span></div>
<div class="t" style="top:412.5px;font-size:10.5px;line-height:15px;color:#5a5a5a;letter-spacing:-0.293px;left:507.5px;"><span>[Netzbezug__K</span></div>
<div class="t" style="top:446.5px;font-size:10.5px;line-height:15px;color:#5a5a5a;letter-spacing:-0.294px;left:294.5px;"><span>Gesamt</span></div>
<div class="t" style="top:463.5px;font-size:10.5px;line-height:15px;color:#333;letter-spacing:-0.589px;font-weight:bold;left:223.5px;"><span>Gesamt</span></div>
<div style="left:221px;top:519.8px;width:433.6px;height:1px;background:#dedede;"></div>
<div style="left:510px;top:534px;width:144.6px;height:18px;border-top:1px solid #d2d2d2;border-left:1px solid #d2d2d2;"></div>
<div class="t" style="top:536.5px;font-size:11px;line-height:15px;color:#444;letter-spacing:-0.331px;left:51px;width:600px;text-align:right;"><span>[&amp;ExecutionTime]</span></div>
<div style="left:186px;top:592px;width:314px;height:105.5px;background:#ffffff;"></div>
<div style="left:502px;top:592px;width:314.5px;height:105.5px;background:#ffffff;"></div>
<svg style="left:187.5px;top:575.5px;" width="12" height="10" viewBox="0 0 12 10"><rect x="0" y="0" width="12" height="9.4" fill="#f2f2f2"/><path d="M0 3.2H12M0 6.3H12" stroke="#8a8a8a" stroke-width="0.8"/><path d="M4 0V9.4M8 0V9.4" stroke="#8a8a8a" stroke-width="0.7"/></svg>
<div class="t" style="top:576.1px;font-size:9px;line-height:13px;color:#e6e6e6;letter-spacing:-0.427px;left:207.7px;"><span>Zeilengruppen</span></div>
<svg style="left:504px;top:575.3px;" width="12" height="10" viewBox="0 0 12 10"><rect x="0" y="0" width="11.6" height="9.4" fill="#f2f2f2"/><path d="M4 0V9.4M8 0V9.4" stroke="#7d7d7d" stroke-width="0.9"/><path d="M0 3.2H12M0 6.3H12" stroke="#b5b5b5" stroke-width="0.6"/></svg>
<div class="t" style="top:576.1px;font-size:9px;line-height:13px;color:#e6e6e6;letter-spacing:-0.469px;left:523.7px;"><span>Spaltengruppen</span></div>
<svg style="left:805px;top:580.8px;" width="7" height="4" viewBox="0 0 7 4"><path d="M0 0H6L3 3.2z" fill="#a0a0a0"/></svg>
<div style="left:186.5px;top:593.7px;width:312.5px;height:14.2px;background:#6a6a6a;border:1px solid #5b9bd5;"></div>
<div style="left:484px;top:594.7px;width:1px;height:12.2px;background:#5b9bd5;"></div>
<svg style="left:488.5px;top:599.2px;" width="6" height="4" viewBox="0 0 6 4"><path d="M0 0H6L3 3.5z" fill="#111"/></svg>
<div class="t" style="top:595.2px;font-size:8px;line-height:11px;color:#888;letter-spacing:0px;left:189.5px;"><span>[</span></div>
<div class="t" style="top:594.7px;font-size:9px;line-height:13px;color:#f4f4f4;letter-spacing:-0.754px;left:195.6px;"><span>Jahr</span></div>
<div style="left:196px;top:608.8px;width:303px;height:14.2px;background:#6a6a6a;border:1px solid #5b9bd5;"></div>
<div style="left:484px;top:609.8px;width:1px;height:12.2px;background:#5b9bd5;"></div>
<svg style="left:488.5px;top:614.3px;" width="6" height="4" viewBox="0 0 6 4"><path d="M0 0H6L3 3.5z" fill="#111"/></svg>
<div class="t" style="top:610.3px;font-size:8px;line-height:11px;color:#888;letter-spacing:0px;left:199px;"><span>[</span></div>
<div class="t" style="top:609.8px;font-size:9px;line-height:13px;color:#f4f4f4;letter-spacing:-0.103px;left:205px;"><span>Monat</span></div>
<div style="left:205.6px;top:623.9px;width:293.4px;height:14.2px;background:#6a6a6a;border:1px solid #5b9bd5;"></div>
<div style="left:484px;top:624.9px;width:1px;height:12.2px;background:#5b9bd5;"></div>
<svg style="left:488.5px;top:629.4px;" width="6" height="4" viewBox="0 0 6 4"><path d="M0 0H6L3 3.5z" fill="#111"/></svg>
<div class="t" style="top:625.4px;font-size:8px;line-height:11px;color:#888;letter-spacing:0px;left:208.6px;"><span>[</span></div>
<div class="t" style="top:624.9px;font-size:9px;line-height:13px;color:#f4f4f4;letter-spacing:-0.446px;left:214.7px;"><span>(Details)</span></div>
<div style="left:816px;top:118px;width:1px;height:580px;background:#3c3c3c;"></div>
<div style="left:819px;top:137px;width:200.5px;height:22px;background:#444444;"></div>
<div style="left:819px;top:159px;width:200.5px;height:498px;background:#ffffff;"></div>
<div class="t" style="top:121.5px;font-size:9px;line-height:13px;color:#e6e6e6;letter-spacing:-0.542px;left:824px;"><span>Eigenschaften</span></div>
<svg style="left:1006px;top:124px;" width="8" height="8" viewBox="0 0 8 8"><path d="M1 1 L7 7 M7 1 L1 7" stroke="#fff" stroke-width="1.7" fill="none"/></svg>
<div class="t" style="top:141.8px;font-size:10.8px;line-height:15px;color:#f4f4f4;letter-spacing:-0.529px;font-weight:bold;left:824.5px;"><span>Bericht</span></div>
<div style="left:819px;top:159px;width:200.5px;height:15.5px;background:#ffffff;border-bottom:1px solid #dfe6ee;"></div>
<div style="left:820px;top:160px;width:13px;height:13px;background:#cde6f7;border:1px solid #6cb4e4;"></div>
<svg style="left:821px;top:161px;" width="11" height="11" viewBox="0 0 11 11"><path d="M1 1.5h2v2h-2zM1 6.5h2v2h-2z" fill="#3c6aa8"/><path d="M4.5 2.5H7M4.5 7.5H7" stroke="#888" stroke-width="0.8"/><path d="M8.5 1V10" stroke="#5d8fd0" stroke-width="1"/><path d="M7.5 1H9.5M7.5 10H9.5" stroke="#5d8fd0" stroke-width="0.8"/></svg>
<svg style="left:835px;top:160px;" width="12" height="13" viewBox="0 0 12 13"><text x="0.3" y="5.8" font-size="6" font-weight="bold" fill="#3c6aa8" font-family="Liberation Sans, sans-serif">A</text><text x="0.5" y="12" font-size="6" font-weight="bold" fill="#555" font-family="Liberation Sans, sans-serif">Z</text><path d="M7.8 1.5V11" stroke="#222" stroke-width="1.1"/><path d="M5.8 8.5L7.8 11.5L9.8 8.5z" fill="#222"/></svg>
<div style="left:849.3px;top:161px;width:1px;height:12px;background:#c6c6c6;"></div>
<svg style="left:853px;top:161px;" width="11" height="11" viewBox="0 0 11 11"><rect x="0.5" y="0.5" width="9.6" height="9.2" fill="#e8ecf5" stroke="#6e86c2" stroke-width="1"/><rect x="0.5" y="0.5" width="9.6" height="2" fill="#5a78bf"/><path d="M2 5H8.5M2 7H8.5" stroke="#9fa8bd" stroke-width="0.8"/></svg>
<div style="left:819px;top:174.5px;width:13px;height:470px;background:#f4f4f4;"></div>
<div style="left:819px;top:176.47px;width:200.5px;height:13.27px;background:#f4f4f4;"></div>
<div class="t" style="top:176.6px;font-size:9px;line-height:13px;color:#111;letter-spacing:-0.224px;font-weight:bold;left:835.5px;"><span>Allgemein</span></div>
<svg style="left:822px;top:180.6px;" width="7" height="5" viewBox="0 0 7 5"><path d="M0.8 0.8L3.5 3.6L6.2 0.8" stroke="#555" stroke-width="1" fill="none"/></svg>
<div style="left:832px;top:202.4px;width:187.5px;height:1px;background:#f8f8f8;"></div>
<div class="t" style="top:189.865px;font-size:9px;line-height:13px;color:#444;letter-spacing:-0.172px;left:835.5px;width:76.5px;overflow:hidden;"><span>Author</span></div>
<div style="left:832px;top:215.66px;width:187.5px;height:1px;background:#f8f8f8;"></div>
<div class="t" style="top:203.13px;font-size:9px;line-height:13px;color:#444;letter-spacing:-0.366px;left:835.5px;width:76.5px;overflow:hidden;"><span>Description</span></div>
<div style="left:832px;top:228.93px;width:187.5px;height:1px;background:#f8f8f8;"></div>
<div class="t" style="top:216.395px;font-size:9px;line-height:13px;color:#9a9a9a;letter-spacing:-0.203px;left:835.5px;width:76.5px;overflow:hidden;"><span>Width</span></div>
<div class="t" style="top:216.395px;font-size:9px;line-height:13px;color:#9a9a9a;letter-spacing:-0.106px;left:915px;"><span>432pt</span></div>
<div style="left:819px;top:229.53px;width:200.5px;height:13.27px;background:#f4f4f4;"></div>
<div class="t" style="top:229.66px;font-size:9px;line-height:13px;color:#111;letter-spacing:-0.375px;font-weight:bold;left:835.5px;"><span>Code</span></div>
<svg style="left:822px;top:233.66px;" width="7" height="5" viewBox="0 0 7 5"><path d="M0.8 0.8L3.5 3.6L6.2 0.8" stroke="#555" stroke-width="1" fill="none"/></svg>
<div style="left:832px;top:255.46px;width:187.5px;height:1px;background:#f8f8f8;"></div>
<div class="t" style="top:242.925px;font-size:9px;line-height:13px;color:#444;letter-spacing:-0.504px;left:835.5px;width:76.5px;overflow:hidden;"><span>Code</span></div>
<div style="left:819px;top:256.06px;width:200.5px;height:13.27px;background:#f4f4f4;"></div>
<div class="t" style="top:256.19px;font-size:9px;line-height:13px;color:#111;letter-spacing:-0.463px;font-weight:bold;left:835.5px;"><span>Lokalisierung</span></div>
<svg style="left:822px;top:260.19px;" width="7" height="5" viewBox="0 0 7 5"><path d="M0.8 0.8L3.5 3.6L6.2 0.8" stroke="#555" stroke-width="1" fill="none"/></svg>
<div style="left:832px;top:281.99px;width:187.5px;height:1px;background:#f8f8f8;"></div>
<div class="t" style="top:269.455px;font-size:9px;line-height:13px;color:#444;letter-spacing:-0.408px;left:835.5px;width:76.5px;overflow:hidden;"><span>DescriptionLocID</span></div>
<div style="left:832px;top:295.25px;width:187.5px;height:1px;background:#f8f8f8;"></div>
<div class="t" style="top:282.72px;font-size:9px;line-height:13px;color:#444;letter-spacing:-0.631px;left:835.5px;width:76.5px;overflow:hidden;"><span>Language</span></div>
<div style="left:819px;top:295.85px;width:200.5px;height:13.27px;background:#f4f4f4;"></div>
<div class="t" style="top:295.985px;font-size:9px;line-height:13px;color:#111;letter-spacing:-0.224px;font-weight:bold;left:835.5px;"><span>Nur Daten</span></div>
<svg style="left:822px;top:299.985px;" width="7" height="5" viewBox="0 0 7 5"><path d="M0.8 0.8L3.5 3.6L6.2 0.8" stroke="#555" stroke-width="1" fill="none"/></svg>
<div style="left:832px;top:321.78px;width:187.5px;height:1px;background:#f8f8f8;"></div>
<div class="t" style="top:309.25px;font-size:9px;line-height:13px;color:#444;letter-spacing:-0.47px;left:835.5px;width:76.5px;overflow:hidden;"><span>DataElementName</span></div>
<div style="left:832px;top:335.05px;width:187.5px;height:1px;background:#f8f8f8;"></div>
<div class="t" style="top:322.515px;font-size:9px;line-height:13px;color:#444;letter-spacing:-0.472px;left:835.5px;width:76.5px;overflow:hidden;"><span>DataElementStyle</span></div>
<div class="t" style="top:322.515px;font-size:9px;line-height:13px;color:#444;letter-spacing:-0.059px;left:915px;"><span>Attribute</span></div>
<div style="left:832px;top:348.31px;width:187.5px;height:1px;background:#f8f8f8;"></div>
<div class="t" style="top:335.78px;font-size:9px;line-height:13px;color:#444;letter-spacing:-0.803px;left:835.5px;width:76.5px;overflow:hidden;"><span>DataSchema</span></div>
<div style="left:832px;top:361.58px;width:187.5px;height:1px;background:#f8f8f8;"></div>
<div class="t" style="top:349.045px;font-size:9px;line-height:13px;color:#444;letter-spacing:-0.438px;left:835.5px;width:76.5px;overflow:hidden;"><span>DataTransform</span></div>
<div style="left:819px;top:362.18px;width:200.5px;height:13.27px;background:#f4f4f4;"></div>
<div class="t" style="top:362.31px;font-size:9px;line-height:13px;color:#111;letter-spacing:-0.303px;font-weight:bold;left:835.5px;"><span>Seite</span></div>
<svg style="left:822px;top:366.31px;" width="7" height="5" viewBox="0 0 7 5"><path d="M0.8 0.8L3.5 3.6L6.2 0.8" stroke="#555" stroke-width="1" fill="none"/></svg>
<div style="left:832px;top:388.11px;width:187.5px;height:1px;background:#f8f8f8;"></div>
<div class="t" style="top:375.575px;font-size:9px;line-height:13px;color:#444;letter-spacing:-0.403px;left:835.5px;width:76.5px;overflow:hidden;"><span>BackgroundColor</span></div>
<div class="t" style="top:375.575px;font-size:9px;line-height:13px;color:#444;letter-spacing:-0.321px;left:931.4px;"><span>Automatisch</span></div>
<div style="left:832px;top:401.37px;width:187.5px;height:1px;background:#f8f8f8;"></div>
<div class="t" style="top:388.84px;font-size:9px;line-height:13px;color:#444;letter-spacing:-0.403px;left:835.5px;width:76.5px;overflow:hidden;"><span>BackgroundImage</span></div>
<svg style="left:823px;top:392.34000000000003px;" width="5" height="7" viewBox="0 0 5 7"><path d="M1 0.8L3.6 3.5L1 6.2" stroke="#b5b5b5" stroke-width="1" fill="none"/></svg>
<div style="left:832px;top:414.64px;width:187.5px;height:1px;background:#f8f8f8;"></div>
<div class="t" style="top:402.105px;font-size:9px;line-height:13px;color:#444;letter-spacing:-0.321px;left:835.5px;width:76.5px;overflow:hidden;"><span>BorderColor</span></div>
<svg style="left:823px;top:405.605px;" width="5" height="7" viewBox="0 0 5 7"><path d="M1 0.8L3.6 3.5L1 6.2" stroke="#b5b5b5" stroke-width="1" fill="none"/></svg>
<div class="t" style="top:402.105px;font-size:9px;line-height:13px;color:#444;letter-spacing:-0.703px;left:915px;"><span>Black</span></div>
<div style="left:832px;top:427.9px;width:187.5px;height:1px;background:#f8f8f8;"></div>
<div class="t" style="top:415.37px;font-size:9px;line-height:13px;color:#444;letter-spacing:-0.457px;left:835.5px;width:76.5px;overflow:hidden;"><span>BorderStyle</span></div>
<svg style="left:823px;top:418.87px;" width="5" height="7" viewBox="0 0 5 7"><path d="M1 0.8L3.6 3.5L1 6.2" stroke="#b5b5b5" stroke-width="1" fill="none"/></svg>
<div class="t" style="top:415.37px;font-size:9px;line-height:13px;color:#444;letter-spacing:-0.504px;left:915px;"><span>None</span></div>
<div style="left:832px;top:441.17px;width:187.5px;height:1px;background:#f8f8f8;"></div>
<div class="t" style="top:428.635px;font-size:9px;line-height:13px;color:#444;letter-spacing:-0.321px;left:835.5px;width:76.5px;overflow:hidden;"><span>BorderWidth</span></div>
<svg style="left:823px;top:432.135px;" width="5" height="7" viewBox="0 0 5 7"><path d="M1 0.8L3.6 3.5L1 6.2" stroke="#b5b5b5" stroke-width="1" fill="none"/></svg>
<div class="t" style="top:428.635px;font-size:9px;line-height:13px;color:#444;letter-spacing:-0.172px;left:915px;"><span>1pt</span></div>
<div style="left:832px;top:454.43px;width:187.5px;height:1px;background:#f8f8f8;"></div>
<div class="t" style="top:441.9px;font-size:9px;line-height:13px;color:#444;letter-spacing:-0.431px;left:835.5px;width:76.5px;overflow:hidden;"><span>Columns</span></div>
<svg style="left:823px;top:445.4px;" width="5" height="7" viewBox="0 0 5 7"><path d="M1 0.8L3.6 3.5L1 6.2" stroke="#b5b5b5" stroke-width="1" fill="none"/></svg>
<div style="left:832px;top:467.7px;width:187.5px;height:1px;background:#f8f8f8;"></div>
<div class="t" style="top:455.165px;font-size:9px;line-height:13px;color:#444;letter-spacing:-0.435px;left:835.5px;width:76.5px;overflow:hidden;"><span>InteractiveSize</span></div>
<svg style="left:823px;top:458.66499999999996px;" width="5" height="7" viewBox="0 0 5 7"><path d="M1 0.8L3.6 3.5L1 6.2" stroke="#b5b5b5" stroke-width="1" fill="none"/></svg>
<div class="t" style="top:455.165px;font-size:9px;line-height:13px;color:#444;letter-spacing:-0.419px;left:915px;"><span>21cm; 29,7cm</span></div>
<div style="left:832px;top:480.96px;width:187.5px;height:1px;background:#f8f8f8;"></div>
<div class="t" style="top:468.43px;font-size:9px;line-height:13px;color:#444;letter-spacing:-0.217px;left:835.5px;width:76.5px;overflow:hidden;"><span>Margins</span></div>
<svg style="left:823px;top:471.93000000000006px;" width="5" height="7" viewBox="0 0 5 7"><path d="M1 0.8L3.6 3.5L1 6.2" stroke="#b5b5b5" stroke-width="1" fill="none"/></svg>
<div class="t" style="top:468.43px;font-size:9px;line-height:13px;color:#444;letter-spacing:-0.418px;left:915px;"><span>2cm; 2cm; 2cm; 2cm</span></div>
<div style="left:832px;top:494.23px;width:187.5px;height:1px;background:#f8f8f8;"></div>
<div class="t" style="top:481.695px;font-size:9px;line-height:13px;color:#444;letter-spacing:-0.879px;left:835.5px;width:76.5px;overflow:hidden;"><span>PageSize</span></div>
<svg style="left:823px;top:485.19500000000005px;" width="5" height="7" viewBox="0 0 5 7"><path d="M1 0.8L3.6 3.5L1 6.2" stroke="#b5b5b5" stroke-width="1" fill="none"/></svg>
<div class="t" style="top:481.695px;font-size:9px;line-height:13px;color:#444;letter-spacing:-0.419px;left:915px;"><span>21cm; 29,7cm</span></div>
<div style="left:819px;top:494.83px;width:200.5px;height:13.27px;background:#f4f4f4;"></div>
<div class="t" style="top:494.96px;font-size:9px;line-height:13px;color:#111;letter-spacing:-0.439px;font-weight:bold;left:835.5px;"><span>Sonstige</span></div>
<svg style="left:822px;top:498.96000000000004px;" width="7" height="5" viewBox="0 0 7 5"><path d="M0.8 0.8L3.5 3.6L6.2 0.8" stroke="#555" stroke-width="1" fill="none"/></svg>
<div style="left:832px;top:520.76px;width:187.5px;height:1px;background:#f8f8f8;"></div>
<div class="t" style="top:508.225px;font-size:9px;line-height:13px;color:#444;letter-spacing:-0.457px;left:835.5px;width:76.5px;overflow:hidden;"><span>AutoRefresh</span></div>
<div class="t" style="top:508.225px;font-size:9px;line-height:13px;color:#444;letter-spacing:-0.516px;left:915px;"><span>0</span></div>
<div style="left:832px;top:534.02px;width:187.5px;height:1px;background:#f8f8f8;"></div>
<div class="t" style="top:521.49px;font-size:9px;line-height:13px;color:#444;letter-spacing:-0.484px;left:835.5px;width:76.5px;overflow:hidden;"><span>ConsumeContainerWhitespace</span></div>
<div class="t" style="top:521.49px;font-size:9px;line-height:13px;color:#444;letter-spacing:-0.803px;left:915px;"><span>False</span></div>
<div style="left:832px;top:547.29px;width:187.5px;height:1px;background:#f8f8f8;"></div>
<div class="t" style="top:534.755px;font-size:9px;line-height:13px;color:#444;letter-spacing:-0.377px;left:835.5px;width:76.5px;overflow:hidden;"><span>CustomProperties</span></div>
<div style="left:832px;top:560.55px;width:187.5px;height:1px;background:#f8f8f8;"></div>
<div class="t" style="top:548.02px;font-size:9px;line-height:13px;color:#444;letter-spacing:-0.436px;left:835.5px;width:76.5px;overflow:hidden;"><span>InitialPageName</span></div>
<div style="left:819px;top:561.15px;width:200.5px;height:13.27px;background:#f4f4f4;"></div>
<div class="t" style="top:561.285px;font-size:9px;line-height:13px;color:#111;letter-spacing:-0.17px;font-weight:bold;left:835.5px;"><span>Variablen</span></div>
<svg style="left:822px;top:565.285px;" width="7" height="5" viewBox="0 0 7 5"><path d="M0.8 0.8L3.5 3.6L6.2 0.8" stroke="#555" stroke-width="1" fill="none"/></svg>
<div style="left:832px;top:587.08px;width:187.5px;height:1px;background:#f8f8f8;"></div>
<div class="t" style="top:574.55px;font-size:9px;line-height:13px;color:#444;letter-spacing:-0.495px;left:835.5px;width:76.5px;overflow:hidden;"><span>DeferVariableEvaluation</span></div>
<div class="t" style="top:574.55px;font-size:9px;line-height:13px;color:#444;letter-spacing:-0.803px;left:915px;"><span>False</span></div>
<div style="left:832px;top:600.35px;width:187.5px;height:1px;background:#f8f8f8;"></div>
<div class="t" style="top:587.815px;font-size:9px;line-height:13px;color:#444;letter-spacing:-0.484px;left:835.5px;width:76.5px;overflow:hidden;"><span>Variables</span></div>
<div style="left:819px;top:600.95px;width:200.5px;height:13.27px;background:#f4f4f4;"></div>
<div class="t" style="top:601.08px;font-size:9px;line-height:13px;color:#111;letter-spacing:-0.441px;font-weight:bold;left:835.5px;"><span>Verweise</span></div>
<svg style="left:822px;top:605.08px;" width="7" height="5" viewBox="0 0 7 5"><path d="M0.8 0.8L3.5 3.6L6.2 0.8" stroke="#555" stroke-width="1" fill="none"/></svg>
<div style="left:832px;top:626.88px;width:187.5px;height:1px;background:#f8f8f8;"></div>
<div class="t" style="top:614.345px;font-size:9px;line-height:13px;color:#444;letter-spacing:-0.602px;left:835.5px;width:76.5px;overflow:hidden;"><span>Assemblies</span></div>
<div style="left:832px;top:640.14px;width:187.5px;height:1px;background:#f8f8f8;"></div>
<div class="t" style="top:627.61px;font-size:9px;line-height:13px;color:#444;letter-spacing:-0.859px;left:835.5px;width:76.5px;overflow:hidden;"><span>Classes</span></div>
<div style="left:912.5px;top:174.5px;width:1px;height:464.3px;background:#f8f8f8;"></div>
<div style="left:912.5px;top:176.47px;width:1px;height:13.27px;background:#f4f4f4;"></div>
<div style="left:912.5px;top:229.53px;width:1px;height:13.27px;background:#f4f4f4;"></div>
<div style="left:912.5px;top:256.06px;width:1px;height:13.27px;background:#f4f4f4;"></div>
<div style="left:912.5px;top:295.85px;width:1px;height:13.27px;background:#f4f4f4;"></div>
<div style="left:912.5px;top:362.18px;width:1px;height:13.27px;background:#f4f4f4;"></div>
<div style="left:912.5px;top:494.83px;width:1px;height:13.27px;background:#f4f4f4;"></div>
<div style="left:912.5px;top:561.15px;width:1px;height:13.27px;background:#f4f4f4;"></div>
<div style="left:912.5px;top:600.95px;width:1px;height:13.27px;background:#f4f4f4;"></div>
<div style="left:819px;top:640.1px;width:13px;height:20px;background:#ffffff;"></div>
<div style="left:914px;top:375px;width:12.2px;height:11.8px;background:#fff;border:1px solid #555;"></div>
<div style="left:819px;top:657px;width:200.5px;height:40.5px;background:#2b2b2b;border:1px solid #5a5a5a;"></div>
<div class="t" style="top:660px;font-size:9px;line-height:13px;color:#fff;letter-spacing:-0.501px;font-weight:bold;left:823.5px;"><span>BackgroundColor</span></div>
<div class="t" style="top:673px;font-size:9px;line-height:13px;color:#ececec;letter-spacing:-0.336px;left:823.5px;"><span>Gibt die Hintergrundfarbe des Elements an.</span></div>
<div style="left:1.1px;top:701px;width:1021.7px;height:21px;background:#333333;"></div>
<div class="t" style="top:704.3px;font-size:9.5px;line-height:13px;color:#f0f0f0;letter-spacing:-0.301px;left:8.3px;"><span>Power BI Report Builder</span></div>
<div style="left:841.3px;top:702.6px;width:13.2px;height:14.6px;background:#f4f4f4;"></div>
<svg style="left:843px;top:704.5px;" width="10" height="11" viewBox="0 0 10 11"><rect x="0.5" y="0.5" width="8.6" height="9.6" fill="#fff" stroke="#8fa6c8" stroke-width="0.9"/><rect x="1.5" y="1.5" width="3.2" height="3.5" fill="#6f96cf"/><rect x="4.5" y="5" width="3.8" height="4" fill="#e9a35a"/></svg>
<svg style="left:856.5px;top:706px;" width="10" height="9" viewBox="0 0 10 9"><rect x="2" y="0.5" width="5.6" height="3" fill="#d9d9d9"/><rect x="0.5" y="3" width="8.6" height="4" fill="#a8a8a8"/><rect x="2" y="5.8" width="5.6" height="2.6" fill="#e8e8e8"/></svg>
<div class="t" style="top:705px;font-size:10px;line-height:14px;color:#f0f0f0;letter-spacing:-1.02px;left:875.8px;"><span>100%</span></div>
<div style="left:906px;top:709px;width:10px;height:3px;background:#f4f4f4;"></div>
<div style="left:920px;top:709px;width:83px;height:2px;background:#bdbdbd;"></div>
<div style="left:960px;top:707px;width:2px;height:6px;background:#d8d8d8;"></div>
<div style="left:1006px;top:709px;width:10px;height:3px;background:#f4f4f4;"></div>
<div style="left:1009.5px;top:705.5px;width:3px;height:10px;background:#f4f4f4;"></div>
<svg style="left:160px;top:340px;" width="70" height="200" viewBox="0 0 70 200"><ellipse cx="34" cy="17.9" rx="24" ry="8.7" fill="none" stroke="#1b9ad7" stroke-width="3.2"/><ellipse cx="34.4" cy="180.5" rx="19.4" ry="7.9" fill="none" stroke="#1b9ad7" stroke-width="3.2"/></svg>
</div></body></html>
